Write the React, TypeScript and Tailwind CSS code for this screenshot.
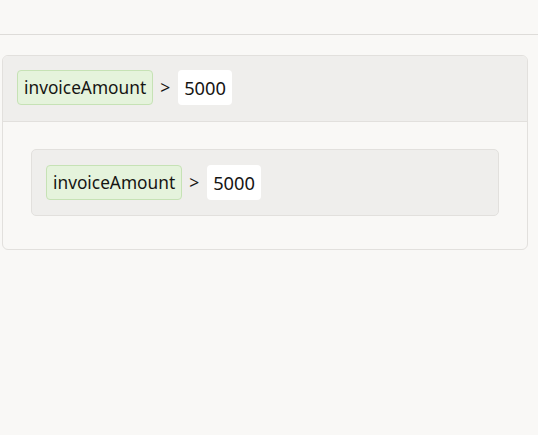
import React from "react";

function Condition() {
  return (
    <div className="flex items-center">
      <div className="h-[35px] flex items-center px-[6px] rounded-[4px] border border-[#c6e2b5] bg-[#e5f3dc] text-[#161513] text-[17.3px]">
        invoiceAmount
      </div>
      <span className="ml-[7px] mr-[8px] text-[#161513] text-[17.5px]">&gt;</span>
      <div className="h-[35px] flex items-center px-[6px] rounded-[4px] bg-white text-[#161513] text-[18.3px]">
        5000
      </div>
    </div>
  );
}

export default function App() {
  return (
    <div
      className="w-[538px] h-[435px] bg-[#f9f8f6]"
      style={{ fontFamily: '"Noto Sans", "Open Sans", sans-serif' }}
    >
      <div className="h-[35px] border-b border-[#dedcd9]" />
      <div className="pt-[20px] pl-[2px] pr-[10px]">
        <div className="rounded-[6px] border border-[#e2e0dd] overflow-hidden">
          <div className="bg-[#efeeec] border-b border-[#e2e0dd] pl-[14px] pt-[14px] pb-[16px]">
            <Condition />
          </div>
          <div className="pt-[27px] pl-[28px] pr-[28px] pb-[33px]">
            <div className="rounded-[5px] border border-[#e2e0dd] bg-[#efeeec] pl-[14px] pt-[15px] pb-[15px]">
              <Condition />
            </div>
          </div>
        </div>
      </div>
    </div>
  );
}
